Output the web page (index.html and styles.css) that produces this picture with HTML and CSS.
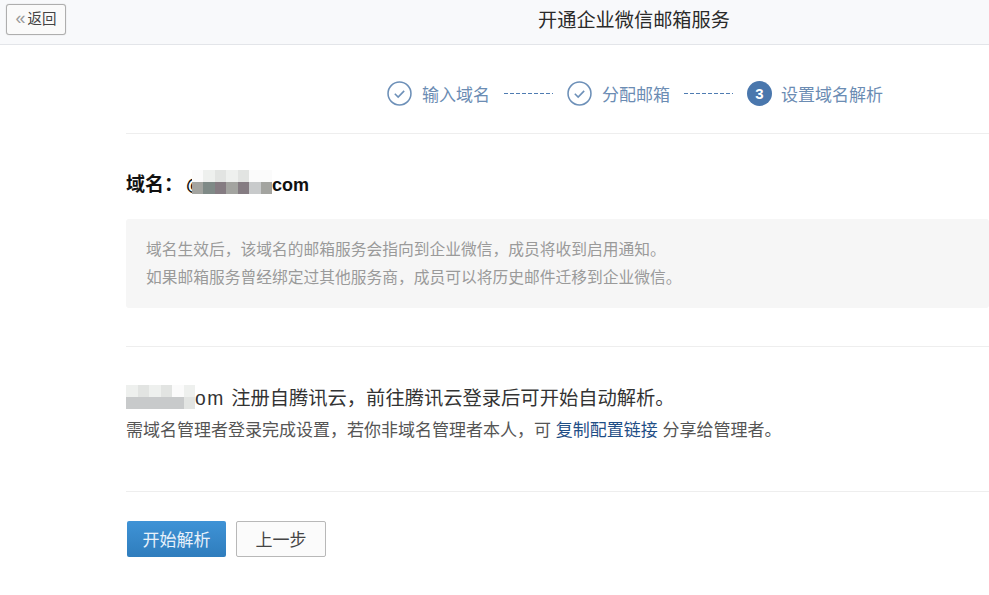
FILE: index.html
```html
<!DOCTYPE html>
<html lang="en">
<head>
    <meta charset="UTF-8">
    <meta name="viewport" content="width=device-width, initial-scale=1.0">
    <title>开通企业微信邮箱服务</title>
    <link rel="stylesheet" href="styles.css">
</head>
<body>
    <div class="topbar">
        <a class="back-button"><span class="back-arrows">«</span>返回</a>
        <div class="topbar-title">开通企业微信邮箱服务</div>
    </div>

    <div class="content">
        <div class="steps">
            <div class="step">
                <svg class="step-icon" viewBox="0 0 24 24"><circle cx="12" cy="12" r="11" /><path d="M7.5 12.3l3.2 3.2 5.8-6" /></svg>
                <span>输入域名</span>
            </div>
            <div class="step-line"></div>
            <div class="step">
                <svg class="step-icon" viewBox="0 0 24 24"><circle cx="12" cy="12" r="11" /><path d="M7.5 12.3l3.2 3.2 5.8-6" /></svg>
                <span>分配邮箱</span>
            </div>
            <div class="step-line"></div>
            <div class="step">
                <span class="step-num">3</span>
                <span>设置域名解析</span>
            </div>
        </div>

        <div class="section domain-section">
            <div class="domain-name">域名：<span class="domain-at">@</span><span class="mosaic mosaic-dark"><i class="c0"></i><i class="c1"></i><i class="c2"></i><i class="c1"></i><i class="c2"></i><i class="c0"></i><i class="c0"></i><i class="c5"></i><i class="c4"></i><i class="c6"></i><i class="c5"></i><i class="c6"></i><i class="c3"></i><i class="c5"></i></span><span class="domain-tail">com</span></div>
            <div class="hint">
                <p>域名生效后，该域名的邮箱服务会指向到企业微信，成员将收到启用通知。</p>
                <p>如果邮箱服务曾经绑定过其他服务商，成员可以将历史邮件迁移到企业微信。</p>
            </div>
        </div>

        <div class="section register-section">
            <div class="register-main"><span class="mosaic mosaic-light"><i class="c1"></i><i class="c2"></i><i class="c1"></i><i class="c2"></i><i class="c0"></i><i class="c1"></i><i class="c3"></i><i class="c3"></i><i class="c3"></i><i class="c3"></i><i class="c3"></i><i class="c2"></i></span><span class="register-tail">om</span> 注册自腾讯云，前往腾讯云登录后可开始自动解析。</div>
            <div class="register-sub">需域名管理者登录完成设置，若你非域名管理者本人，可 <a class="link">复制配置链接</a> 分享给管理者。</div>
        </div>

        <div class="actions">
            <button class="btn btn-primary">开始解析</button>
            <button class="btn">上一步</button>
        </div>
    </div>
</body>
</html>
```

FILE: styles.css
```css
body {
    margin: 0;
    background-color: #fff;
    font-family: "Liberation Sans", "Noto Sans CJK SC", sans-serif;
    color: #222;
    overflow: hidden;
}
.topbar {
    position: relative;
    height: 44px;
    background-color: #f8f9fb;
    border-bottom: 1px solid #e3e5e9;
}
.back-button {
    position: absolute;
    left: 6px;
    top: 4px;
    box-sizing: border-box;
    width: 60px;
    height: 31px;
    line-height: 27px;
    text-align: center;
    font-size: 14.5px;
    color: #444;
    background-color: #fafafa;
    border: 1px solid #aeaeae;
    border-radius: 3px;
    box-shadow: 0 0 1px #bbb;
}
.back-arrows {
    color: #999;
    font-size: 18px;
    margin-right: 2px;
}
.topbar-title {
    padding-left: 279px;
    line-height: 41px;
    text-align: center;
    font-size: 19.2px;
    color: #2a2a2a;
}
.content {
    margin-left: 126px;
}
.steps {
    display: flex;
    align-items: center;
    height: 89px;
    padding-left: 261px;
    padding-top: 9px;
    box-sizing: border-box;
    border-bottom: 1px solid #eee;
    font-size: 17px;
    color: #6b8cb3;
}
.step {
    display: flex;
    align-items: center;
    gap: 10px;
}
.step-icon {
    width: 25px;
    height: 25px;
    fill: none;
    stroke: #6d90b8;
    stroke-width: 1.5;
}
.step-num {
    width: 25px;
    height: 25px;
    margin-right: -1px;
    border-radius: 50%;
    background-color: #4a77ad;
    color: #fff;
    font-size: 15px;
    font-weight: bold;
    line-height: 25px;
    text-align: center;
}
.step-line {
    width: 49px;
    height: 1px;
    margin: 0 14px;
    background: repeating-linear-gradient(90deg, #4f7cb2 0 4px, transparent 4px 6px);
}
.section {
    border-bottom: 1px solid #eee;
}
.domain-section {
    height: 213px;
    box-sizing: border-box;
    padding-top: 37px;
}
.domain-name {
    height: 28px;
    line-height: 28px;
    font-size: 19px;
    font-weight: bold;
    color: #111;
}
.domain-at {
    margin-left: 3px;
}
.domain-tail {
    font-size: 18px;
}
.mosaic {
    display: inline-grid;
    vertical-align: middle;
    grid-auto-rows: 12px;
}
.mosaic i {
    display: block;
}
.mosaic-dark {
    grid-template-columns: repeat(7, 11.5px);
    margin-left: -13px;
    margin-top: -8px;
}
.mosaic-light {
    grid-template-columns: repeat(6, 11.5px);
}
.c0 { background-color: #fbfbfb; }
.c1 { background-color: #eef0ee; }
.c2 { background-color: #e2e4e2; }
.c3 { background-color: #c8cacb; }
.c4 { background-color: #7f8a87; }
.c5 { background-color: #a3a4a0; }
.c6 { background-color: #857c82; }
.hint {
    margin-top: 20px;
    height: 89px;
    box-sizing: border-box;
    padding: 17px 20px;
    background-color: #f6f6f6;
    border-radius: 3px;
    font-size: 15.75px;
    line-height: 28px;
    color: #9a9a9a;
}
.hint p {
    margin: 0;
}
.register-section {
    height: 145px;
    box-sizing: border-box;
    padding-top: 37px;
}
.register-main {
    height: 30px;
    line-height: 30px;
    font-size: 19.3px;
    color: #333;
}
.register-main .mosaic {
    margin-top: -6px;
}
.register-tail {
    letter-spacing: 1.5px;
    margin-right: 1px;
}
.register-sub {
    margin-top: 2px;
    line-height: 30px;
    font-size: 17px;
    color: #555;
}
.link {
    color: #1f4e86;
}
.actions {
    display: flex;
    gap: 10px;
    padding-top: 29px;
    padding-left: 1px;
}
.btn {
    box-sizing: border-box;
    width: 90px;
    height: 36px;
    padding: 0 0 2px;
    font-family: inherit;
    font-size: 17px;
    color: #444;
    background-color: #fbfbfb;
    border: 1px solid #b8b8b8;
    border-radius: 2px;
}
.btn-primary {
    width: 99px;
    color: #e8f1fa;
    background: linear-gradient(#3f93d6, #2f7dbd);
    border: none;
}
```
